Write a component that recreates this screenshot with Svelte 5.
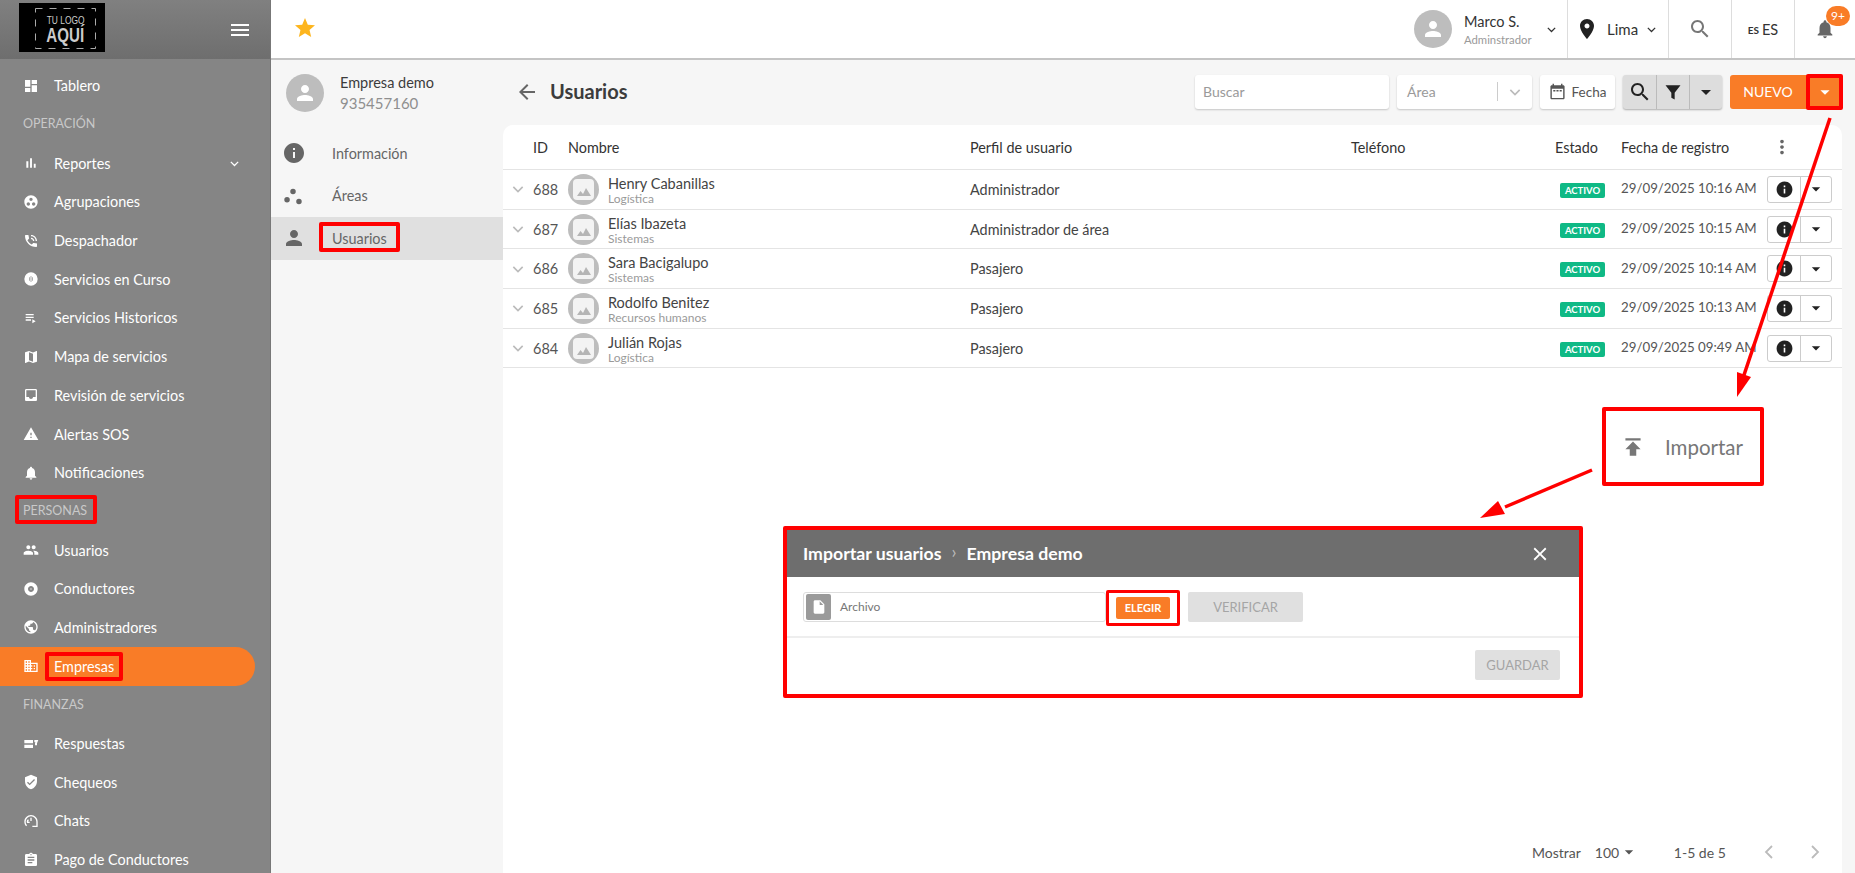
<script>
  const p = {
    dashboard: 'M3 13h8V3H3v10zm0 8h8v-6H3v6zm10 0h8V11h-8v10zm0-18v6h8V3h-8z',
    bars: 'M5 9.2h3V19H5zM10.6 5h2.8v14h-2.8zm5.6 8H19v6h-2.8z',
    group: 'M12 2C6.48 2 2 6.48 2 12s4.48 10 10 10 10-4.48 10-10S17.52 2 12 2zM8 17.5c-1.38 0-2.5-1.12-2.5-2.5s1.12-2.5 2.5-2.5 2.5 1.12 2.5 2.5-1.12 2.5-2.5 2.5zM9.5 8c0-1.38 1.12-2.5 2.5-2.5s2.5 1.12 2.5 2.5-1.12 2.5-2.5 2.5S9.5 9.38 9.5 8zm6.5 9.5c-1.38 0-2.5-1.12-2.5-2.5s1.12-2.5 2.5-2.5 2.5 1.12 2.5 2.5-1.12 2.5-2.5 2.5z',
    phone: 'M20 15.5c-1.25 0-2.45-.2-3.57-.57-.35-.11-.74-.03-1.02.24l-2.2 2.2c-2.83-1.44-5.15-3.75-6.59-6.59l2.2-2.21c.28-.26.36-.65.25-1C8.7 6.45 8.5 5.25 8.5 4c0-.55-.45-1-1-1H4c-.55 0-1 .45-1 1 0 9.39 7.61 17 17 17 .55 0 1-.45 1-1v-3.5c0-.55-.45-1-1-1zM19 12h2c0-4.97-4.03-9-9-9v2c3.87 0 7 3.13 7 7zm-4 0h2c0-2.76-2.24-5-5-5v2c1.66 0 3 1.34 3 3z',
    live: 'M12 2a10 10 0 1 0 0 20 10 10 0 0 0 0-20zM9 9.5h1v5H9zm2.5-2h1v9h-1zm2.5 2h1v5h-1z',
    playlist: 'M4 10h12v2H4zm0-4h12v2H4zm0 8h8v2H4zm10 0v6l5-3z',
    map: 'M20.5 3l-.16.03L15 5.1 9 3 3.36 4.9c-.21.07-.36.25-.36.48V20.5c0 .28.22.5.5.5l.16-.03L9 18.9l6 2.1 5.64-1.9c.21-.07.36-.25.36-.48V3.5c0-.28-.22-.5-.5-.5zM15 19l-6-2.11V5l6 2.11V19z',
    inbox: 'M19 3H5c-1.1 0-2 .9-2 2v14c0 1.1.9 2 2 2h14c1.1 0 2-.9 2-2V5c0-1.1-.9-2-2-2zm0 12h-4c0 1.66-1.35 3-3 3s-3-1.34-3-3H5V5h14v10z',
    warning: 'M1 21h22L12 2 1 21zm12-3h-2v-2h2v2zm0-4h-2v-4h2v4z',
    bell: 'M12 22c1.1 0 2-.9 2-2h-4c0 1.1.89 2 2 2zm6-6v-5c0-3.07-1.64-5.64-4.5-6.32V4c0-.83-.67-1.5-1.5-1.5s-1.5.67-1.5 1.5v.68C7.63 5.36 6 7.92 6 11v5l-2 2v1h16v-1l-2-2z',
    people: 'M16 11c1.66 0 2.99-1.34 2.99-3S17.66 5 16 5c-1.66 0-3 1.34-3 3s1.34 3 3 3zm-8 0c1.66 0 2.99-1.34 2.99-3S9.66 5 8 5C6.34 5 5 6.34 5 8s1.34 3 3 3zm0 2c-2.33 0-7 1.17-7 3.5V19h14v-2.5c0-2.33-4.67-3.5-7-3.5zm8 0c-.29 0-.62.02-.97.05 1.16.84 1.97 1.97 1.97 3.45V19h6v-2.5c0-2.33-4.67-3.5-7-3.5z',
    album: 'M12 2C6.48 2 2 6.48 2 12s4.48 10 10 10 10-4.48 10-10S17.52 2 12 2zm0 14.5c-2.49 0-4.5-2.01-4.5-4.5S9.51 7.5 12 7.5s4.5 2.01 4.5 4.5-2.01 4.5-4.5 4.5zm0-5.5c-.55 0-1 .45-1 1s.45 1 1 1 1-.45 1-1-.45-1-1-1z',
    globe: 'M12 2C6.48 2 2 6.48 2 12s4.48 10 10 10 10-4.48 10-10S17.52 2 12 2zm-1 17.93c-3.95-.49-7-3.85-7-7.93 0-.62.08-1.21.21-1.79L9 15v1c0 1.1.9 2 2 2v1.93zm6.9-2.54c-.26-.81-1-1.39-1.9-1.39h-1v-3c0-.55-.45-1-1-1H8v-2h2c.55 0 1-.45 1-1V7h2c1.1 0 2-.9 2-2v-.41c2.93 1.19 5 4.06 5 7.41 0 2.08-.8 3.97-2.1 5.39z',
    business: 'M12 7V3H2v18h20V7H12zM6 19H4v-2h2v2zm0-4H4v-2h2v2zm0-4H4V9h2v2zm0-4H4V5h2v2zm4 12H8v-2h2v2zm0-4H8v-2h2v2zm0-4H8V9h2v2zm0-4H8V5h2v2zm10 12h-8v-2h2v-2h-2v-2h2v-2h-2V9h8v10zm-2-8h-2v2h2v-2zm0 4h-2v2h2v-2z',
    answers: 'M2 6h13v5H2zm0 7h13v5H2zm15-7h6l-2 5v3h-3v-4h1.5L17 9z',
    shield: 'M12 1L3 5v6c0 5.55 3.84 10.74 9 12 5.16-1.26 9-6.45 9-12V5l-9-4zm-2 16l-4-4 1.41-1.41L10 14.17l6.59-6.59L18 9l-8 8z',
    gauge: 'M12 3C6.5 3 2 7.5 2 13c0 2.6 1 5 2.6 6.8l1.5-1.3A8 8 0 0 1 4 13a8 8 0 0 1 16 0v6h-6v2h8v-8c0-5.5-4.5-10-10-10zm-1 4v5h2V7zM6 11a6 6 0 0 0 0 4h4v-2H8c0-1 .3-1.6.8-2.4L7.5 9.5z',
    clipboard: 'M19 3h-4.18C14.4 1.84 13.3 1 12 1c-1.3 0-2.4.84-2.82 2H5c-1.1 0-2 .9-2 2v14c0 1.1.9 2 2 2h14c1.1 0 2-.9 2-2V5c0-1.1-.9-2-2-2zm-7 0c.55 0 1 .45 1 1s-.45 1-1 1-1-.45-1-1 .45-1 1-1zm2 14H7v-2h7v2zm3-4H7v-2h10v2zm0-4H7V7h10v2z',
    info: 'M12 2C6.48 2 2 6.48 2 12s4.48 10 10 10 10-4.48 10-10S17.52 2 12 2zm1 15h-2v-6h2v6zm0-8h-2V7h2v2z',
    person: 'M12 12c2.21 0 4-1.79 4-4s-1.79-4-4-4-4 1.79-4 4 1.79 4 4 4zm0 2c-2.67 0-8 1.34-8 4v2h16v-2c0-2.66-5.33-4-8-4z',
    place: 'M12 2C8.13 2 5 5.13 5 9c0 5.25 7 13 7 13s7-7.75 7-13c0-3.87-3.13-7-7-7zm0 9.5c-1.38 0-2.5-1.12-2.5-2.5s1.12-2.5 2.5-2.5 2.5 1.12 2.5 2.5-1.12 2.5-2.5 2.5z',
    search: 'M15.5 14h-.79l-.28-.27C15.41 12.59 16 11.11 16 9.5 16 5.91 13.09 3 9.5 3S3 5.91 3 9.5 5.91 16 9.5 16c1.61 0 3.09-.59 4.23-1.57l.27.28v.79l5 4.99L20.49 19l-4.99-5zm-6 0C7.01 14 5 11.99 5 9.5S7.01 5 9.5 5 14 7.01 14 9.5 11.99 14 9.5 14z',
    funnel: 'M3 4h18l-7 9v8l-4-2v-6z',
    event: 'M20 3h-1V1h-2v2H7V1H5v2H4c-1.1 0-2 .9-2 2v16c0 1.1.9 2 2 2h16c1.1 0 2-.9 2-2V5c0-1.1-.9-2-2-2zm0 18H4V8h16v13zM6 10h3v2H6zm4.5 0h3v2h-3zm4.5 0h3v2h-3z',
    back: 'M20 11H7.83l5.59-5.59L12 4l-8 8 8 8 1.41-1.41L7.83 13H20v-2z',
    publish: 'M5 4v2h14V4H5zm0 10h4v6h6v-6h4l-7-7-7 7z',
    file: 'M6 2c-1.1 0-1.99.9-1.99 2L4 20c0 1.1.89 2 1.99 2H18c1.1 0 2-.9 2-2V8l-6-6H6zm7 7V3.5L18.5 9H13z',
    close: 'M19 6.41L17.59 5 12 10.59 6.41 5 5 6.41 10.59 12 5 17.59 6.41 19 12 13.41 17.59 19 19 17.59 13.41 12z',
    star: 'M12 17.27L18.18 21l-1.64-7.03L22 9.24l-7.19-.61L12 2 9.19 8.63 2 9.24l5.46 4.73L5.82 21z',
    dots: 'M12 8c1.1 0 2-.9 2-2s-.9-2-2-2-2 .9-2 2 .9 2 2 2zm0 2c-1.1 0-2 .9-2 2s.9 2 2 2 2-.9 2-2-.9-2-2-2zm0 6c-1.1 0-2 .9-2 2s.9 2 2 2 2-.9 2-2-.9-2-2-2z',
    caret: 'M7 10l5 5 5-5z',
    areas: 'M12 4a3 3 0 1 0 0 6 3 3 0 0 0 0-6zM5.5 13a3 3 0 1 0 0 6 3 3 0 0 0 0-6zM18.5 15a3 3 0 1 0 0 6 3 3 0 0 0 0-6z'
  };

  const menu = [
    { label: 'Tablero', icon: 'dashboard' },
    { section: 'OPERACIÓN' },
    { label: 'Reportes', icon: 'bars', more: true },
    { label: 'Agrupaciones', icon: 'group' },
    { label: 'Despachador', icon: 'phone' },
    { label: 'Servicios en Curso', icon: 'live' },
    { label: 'Servicios Historicos', icon: 'playlist' },
    { label: 'Mapa de servicios', icon: 'map' },
    { label: 'Revisión de servicios', icon: 'inbox' },
    { label: 'Alertas SOS', icon: 'warning' },
    { label: 'Notificaciones', icon: 'bell' },
    { section: 'PERSONAS' },
    { label: 'Usuarios', icon: 'people' },
    { label: 'Conductores', icon: 'album' },
    { label: 'Administradores', icon: 'globe' },
    { label: 'Empresas', icon: 'business', active: true },
    { section: 'FINANZAS' },
    { label: 'Respuestas', icon: 'answers' },
    { label: 'Chequeos', icon: 'shield' },
    { label: 'Chats', icon: 'gauge' },
    { label: 'Pago de Conductores', icon: 'clipboard' }
  ];

  const users = [
    { id: 688, name: 'Henry Cabanillas', area: 'Logística', role: 'Administrador', date: '29/09/2025 10:16 AM' },
    { id: 687, name: 'Elías Ibazeta', area: 'Sistemas', role: 'Administrador de área', date: '29/09/2025 10:15 AM' },
    { id: 686, name: 'Sara Bacigalupo', area: 'Sistemas', role: 'Pasajero', date: '29/09/2025 10:14 AM' },
    { id: 685, name: 'Rodolfo Benitez', area: 'Recursos humanos', role: 'Pasajero', date: '29/09/2025 10:13 AM' },
    { id: 684, name: 'Julián Rojas', area: 'Logística', role: 'Pasajero', date: '29/09/2025 09:49 AM' }
  ];
</script>

{#snippet icon(name, size = 24)}
  <svg width={size} height={size} viewBox="0 0 24 24" fill="currentColor" aria-hidden="true"><path fill-rule="evenodd" d={p[name]} /></svg>
{/snippet}

{#snippet chevron(size = 12, color = '#555')}
  <svg width={size} height={size} viewBox="0 0 12 12" fill="none" stroke={color} stroke-width="1.4" aria-hidden="true"><path d="M2 4.2l4 4 4-4" /></svg>
{/snippet}

<div class="app">
  <aside class="sidebar">
    <div class="brand">
      <div class="logo">
        <svg class="logo-frame" width="61" height="41" viewBox="0 0 61 41" fill="none" stroke="#aaa" aria-hidden="true"><rect x="0.5" y="0.5" width="60" height="40" stroke-dasharray="7 7" /></svg>
        <span class="logo-small">TU LOGO</span>
        <span class="logo-big">AQUÍ</span>
      </div>
      <div class="burger"><i></i><i></i><i></i></div>
    </div>
    <nav>
      {#each menu as m}
        {#if m.section}
          <div class="section">{m.section}</div>
        {:else}
          <div class="item" class:active={m.active}>
            <span class="item-icon">{@render icon(m.icon, 16)}</span>
            <span>{m.label}</span>
            {#if m.more}<span class="item-more">{@render chevron(11, '#fff')}</span>{/if}
          </div>
        {/if}
      {/each}
    </nav>
  </aside>

  <div class="right">
    <header class="topbar">
      <span class="star">{@render icon('star', 24)}</span>
      <div class="top-user">
        <span class="avatar">{@render icon('person', 24)}</span>
        <div class="who"><b>Marco S.</b><small>Adminstrador</small></div>
        {@render chevron(11, '#333')}
      </div>
      <div class="top-cell city">
        <span class="pin">{@render icon('place', 24)}</span>
        <span>Lima</span>
        {@render chevron(11, '#333')}
      </div>
      <div class="top-cell s">{@render icon('search', 24)}</div>
      <div class="top-cell lang"><small>ES</small> ES</div>
      <div class="top-cell bell">
        {@render icon('bell', 22)}
        <span class="badge">9+</span>
      </div>
    </header>

    <div class="body">
      <div class="panel">
        <div class="company">
          <span class="avatar">{@render icon('person', 24)}</span>
          <div class="company-text"><div>Empresa demo</div><div class="phone">935457160</div></div>
        </div>
        <div class="tab"><span class="tab-icon">{@render icon('info', 24)}</span>Información</div>
        <div class="tab"><span class="tab-icon">{@render icon('areas', 22)}</span>Áreas</div>
        <div class="tab selected"><span class="tab-icon">{@render icon('person', 24)}</span>Usuarios</div>
      </div>

      <main class="main">
        <div class="toolbar">
          <span class="back">{@render icon('back', 24)}</span>
          <h1>Usuarios</h1>
          <div class="tools">
            <div class="field search-field">Buscar</div>
            <div class="field area-field">
              <span>Área</span>
              <span class="area-end">{@render chevron(14, '#bbb')}</span>
            </div>
            <div class="field date-field">{@render icon('event', 17)}<span>Fecha</span></div>
            <div class="btn-group">
              <span>{@render icon('search', 24)}</span>
              <span>{@render icon('funnel', 20)}</span>
              <span>{@render icon('caret', 24)}</span>
            </div>
            <div class="new-btn">
              <span class="new-label">NUEVO</span>
              <span class="new-caret">{@render icon('caret', 22)}</span>
            </div>
          </div>
        </div>

        <section class="card">
          <div class="row head">
            <span></span>
            <span>ID</span>
            <span>Nombre</span>
            <span>Perfil de usuario</span>
            <span>Teléfono</span>
            <span>Estado</span>
            <span>Fecha de registro</span>
            <span class="head-dots">{@render icon('dots', 22)}</span>
          </div>
          {#each users as u}
            <div class="row">
              <span class="row-chev">{@render chevron(14, '#bbb')}</span>
              <span class="num">{u.id}</span>
              <div class="name-cell">
                <span class="thumb"><span class="thumb-in">
                  <svg width="14" height="8" viewBox="0 0 14 8" fill="#b5b5b5" aria-hidden="true"><path d="M0 8l3.5-5 2.5 3 3-6 5 8z" /></svg>
                </span></span>
                <div class="name-text"><div>{u.name}</div><small>{u.area}</small></div>
              </div>
              <span>{u.role}</span>
              <span></span>
              <span><em class="status">ACTIVO</em></span>
              <span class="date">{u.date}</span>
              <div class="row-actions">
                <span class="ra-info">{@render icon('info', 19)}</span>
                <span class="ra-caret">{@render icon('caret', 20)}</span>
              </div>
            </div>
          {/each}
          <div class="pager">
            <span>Mostrar</span>
            <span class="pager-size">100 {@render icon('caret', 20)}</span>
            <span class="pager-range">1-5 de 5</span>
            <svg width="12" height="16" viewBox="0 0 12 16" fill="none" stroke="#bbb" stroke-width="1.8" aria-hidden="true"><path d="M9 2L3 8l6 6" /></svg>
            <svg class="pager-next" width="12" height="16" viewBox="0 0 12 16" fill="none" stroke="#bbb" stroke-width="1.8" aria-hidden="true"><path d="M3 2l6 6-6 6" /></svg>
          </div>
        </section>
      </main>
    </div>
  </div>

  <!-- notas del tutorial encima de la pantalla -->
  <div class="mark m-personas"></div>
  <div class="mark m-empresas"></div>
  <div class="mark m-usuarios"></div>
  <div class="mark m-caret"></div>

  <div class="import-box">
    <span class="import-icon">{@render icon('publish', 26)}</span>
    <span>Importar</span>
  </div>

  <div class="dialog">
    <div class="dialog-head">
      <span>Importar usuarios</span>
      <span class="d-sep">›</span>
      <span>Empresa demo</span>
      <span class="d-close">{@render icon('close', 22)}</span>
    </div>
    <div class="dialog-body">
      <div class="file-input">
        <span class="file-icon">{@render icon('file', 16)}</span>
        <span class="file-label">Archivo</span>
        <span class="choose-mark"><span class="choose">ELEGIR</span></span>
      </div>
      <span class="disabled verify">VERIFICAR</span>
    </div>
    <div class="dialog-foot"><span class="disabled save">GUARDAR</span></div>
  </div>

  <svg class="arrows" width="1855" height="873" viewBox="0 0 1855 873" aria-hidden="true">
    <path d="M1830 118L1743 378" stroke="#f00" stroke-width="3.5" fill="none" />
    <path d="M1737 397L1737 372L1751 377z" fill="#f00" />
    <path d="M1592 470L1505 507" stroke="#f00" stroke-width="3.5" fill="none" />
    <path d="M1480 518L1498 501L1505 514z" fill="#f00" />
  </svg>
</div>

<style>
  :global(body) {
    margin: 0;
    overflow: hidden;
    background: #f6f6f6;
    font-family: Lato, "Noto Sans", sans-serif;
    color: #3c3c3c;
  }

  .app {
    position: relative;
    display: flex;
    width: 1855px;
    height: 873px;
    overflow: hidden;
  }

  /* menu lateral */
  .sidebar {
    width: 271px;
    flex: none;
    background: #858585;
    color: #fff;
    border-right: 1px solid #777;
    box-sizing: border-box;
  }

  .brand {
    display: flex;
    align-items: center;
    justify-content: space-between;
    height: 59px;
    padding: 0 21px 0 19px;
    background: linear-gradient(180deg, #808080, #6e6e6e);
  }

  .logo {
    position: relative;
    width: 86px;
    height: 49px;
    margin-top: -4px;
    padding: 5px 0 0 7px;
    box-sizing: border-box;
    background: #000;
    display: flex;
    flex-direction: column;
    align-items: center;
    justify-content: center;
    color: #ccc;
    font-family: "Liberation Sans", sans-serif;
    line-height: 1;
  }

  .logo-frame { position: absolute; left: 16px; top: 5px; }
  .logo-small { font-size: 10.5px; transform: scaleX(0.8); }
  .logo-big { font-size: 21px; font-weight: 700; line-height: 20px; transform: scaleX(0.72); }

  .burger { display: flex; flex-direction: column; gap: 3px; }
  .burger i { display: block; width: 18px; height: 2px; background: #fff; }

  nav { padding-top: 7.5px; }

  .section {
    height: 38.7px;
    line-height: 38.7px;
    padding-left: 23px;
    font-size: 12.5px;
    color: #c9c9c9;
  }

  .item {
    display: flex;
    align-items: center;
    height: 38.7px;
    padding-left: 23px;
    font-size: 14.4px;
    color: #fff;
    box-sizing: border-box;
  }

  .item-icon { width: 31px; display: flex; flex: none; }
  .item-more { margin-left: auto; margin-right: 30px; display: flex; }

  .item.active {
    width: 255px;
    background: #f97c27;
    border-radius: 0 20px 20px 0;
  }

  /* barra superior */
  .right { flex: 1; display: flex; flex-direction: column; min-width: 0; }

  .topbar {
    display: flex;
    align-items: stretch;
    height: 60px;
    box-sizing: border-box;
    background: #fff;
    border-bottom: 2px solid #c4c4c4;
    font-size: 15px;
  }

  .star { color: #fdb51e; margin: 16px auto 0 22px; }

  .avatar {
    width: 38px;
    height: 38px;
    flex: none;
    border-radius: 50%;
    background: #bdbdbd;
    color: #fff;
    display: flex;
    align-items: center;
    justify-content: center;
  }

  .top-user {
    display: flex;
    align-items: center;
    width: 153px;
    box-sizing: border-box;
    padding-right: 10px;
  }

  .who { margin: 0 auto 0 12px; }
  .who b { display: block; font-weight: 400; font-size: 14.5px; color: #333; }
  .who small { display: block; font-size: 11.3px; color: #9a9a9a; margin-top: 3px; }

  .top-cell {
    display: flex;
    align-items: center;
    justify-content: center;
    box-sizing: border-box;
    border-left: 1px solid #ddd;
    position: relative;
    color: #333;
  }

  .city { width: 101px; gap: 8px; justify-content: flex-start; padding-left: 7px; }
  .pin { display: flex; color: #222; }
  .s { width: 63px; color: #777; }
  .lang { width: 63px; font-size: 14.5px; gap: 3px; }
  .lang small { font-size: 10px; font-weight: 700; margin-top: 2px; }
  .bell { width: 61px; color: #666; }

  .badge {
    position: absolute;
    top: 6px;
    right: 5px;
    width: 24px;
    height: 20px;
    border-radius: 10px;
    background: #f97c27;
    color: #fff;
    font-size: 12px;
    text-align: center;
    line-height: 20px;
  }

  /* contenido */
  .body { flex: 1; display: flex; min-height: 0; }

  .panel { width: 232px; flex: none; padding-top: 14px; font-size: 14.4px; }

  .company { display: flex; align-items: center; padding-left: 15px; height: 38px; margin-bottom: 20px; }
  .company-text { margin-left: 16px; font-size: 14.5px; line-height: 20px; }
  .phone { color: #8f8f8f; font-size: 15px; }

  .tab { display: flex; align-items: center; height: 42.5px; color: #666; }
  .tab-icon { width: 61px; padding-left: 11px; box-sizing: border-box; display: flex; align-items: center; color: #666; }
  .tab.selected { background: #e0e0e0; }

  .main { flex: 1; display: flex; flex-direction: column; min-width: 0; padding-right: 13px; }

  .toolbar { display: flex; align-items: center; height: 63px; margin-bottom: 2px; flex: none; }
  .back { display: flex; margin-left: 12px; color: #666; }

  h1 { margin: -2px 0 0 11px; font-size: 20px; font-weight: 700; color: #3c3c3c; }

  .tools { display: flex; align-items: center; gap: 8px; margin-left: auto; margin-right: -1px; }

  .field {
    display: flex;
    align-items: center;
    height: 34px;
    background: #fff;
    border-radius: 3px;
    box-shadow: 0 1px 2px rgba(0, 0, 0, 0.2);
    box-sizing: border-box;
    font-size: 14px;
    color: #9a9a9a;
  }

  .search-field { width: 194px; padding-left: 8px; }
  .area-field { width: 135px; padding-left: 10px; justify-content: space-between; }
  .area-end { border-left: 1px solid #ccc; height: 19px; padding: 0 10px; display: flex; align-items: center; }
  .date-field { width: 75px; gap: 6px; justify-content: center; color: #555; font-size: 13.5px; }

  .btn-group { display: flex; height: 34px; border-radius: 3px; background: #ddd; box-shadow: 0 1px 2px rgba(0, 0, 0, 0.3); color: #222; }
  .btn-group span { width: 33px; display: flex; align-items: center; justify-content: center; }
  .btn-group span + span { border-left: 1px solid #bbb; box-sizing: border-box; }

  .new-btn { display: flex; height: 34px; width: 113px; border-radius: 3px; background: #f97c27; color: #fff; font-size: 14px; }
  .new-label { flex: 1; display: flex; align-items: center; justify-content: center; }
  .new-caret { width: 37px; display: flex; align-items: center; justify-content: center; }

  .card {
    position: relative;
    flex: 1;
    background: #fff;
    border-radius: 10px 10px 0 0;
    font-size: 14.4px;
    color: #444;
  }

  .row {
    display: grid;
    grid-template-columns: 30px 35px 402px 381px 204px 66px 146px 75px;
    align-items: center;
    height: 39.7px;
    box-sizing: border-box;
    border-bottom: 1px solid #e4e4e4;
  }

  .head { height: 45px; color: #333; }
  .head-dots { display: flex; margin-left: 4px; color: #666; }

  .row-chev { display: flex; justify-content: center; }
  .num { font-size: 14.5px; color: #555; }

  .name-cell { display: flex; align-items: center; gap: 9px; }
  .thumb { width: 31px; height: 31px; border-radius: 50%; background: #bdbdbd; display: flex; align-items: center; justify-content: center; flex: none; }
  .thumb-in { width: 21px; height: 21px; border-radius: 4px; background: #f3f3f3; display: flex; align-items: flex-end; justify-content: center; padding-bottom: 4px; box-sizing: border-box; }
  .name-text { font-size: 14.5px; line-height: 16px; color: #444; padding-top: 3px; }
  .name-text small { display: block; font-size: 12px; line-height: 14px; color: #9a9a9a; }

  .status { display: block; margin: 2px 0 0 5px; font-style: normal; font-size: 9.5px; font-weight: 700; line-height: 15px; width: 45px; text-align: center; border-radius: 2px; background: #0fb985; color: #fff; }
  .date { color: #555; font-size: 13.3px; margin-top: -2px; white-space: nowrap; }

  .row-actions { display: flex; width: 65px; height: 27px; border: 1px solid #ccc; border-radius: 3px; box-sizing: border-box; color: #222; }
  .ra-info { width: 32px; display: flex; align-items: center; justify-content: center; border-right: 1px solid #ccc; }
  .ra-caret { flex: 1; display: flex; align-items: center; justify-content: center; }

  .pager {
    position: absolute;
    right: 0;
    bottom: 0;
    display: flex;
    align-items: center;
    height: 42px;
    width: 310px;
    box-sizing: border-box;
    font-size: 14px;
    color: #555;
  }

  .pager-size { display: flex; align-items: center; margin-left: 14px; width: 79px; }
  .pager-range { width: 89px; }
  .pager-next { margin-left: 34px; }

  /* recuadros rojos de la guia */
  .mark { position: absolute; border: 4px solid #f00; border-radius: 2px; box-sizing: border-box; }
  .m-personas { left: 15px; top: 495px; width: 82px; height: 29px; }
  .m-empresas { left: 45px; top: 652px; width: 78px; height: 29px; }
  .m-usuarios { left: 319px; top: 222px; width: 81px; height: 30px; }
  .m-caret { left: 1806px; top: 74px; width: 37px; height: 36px; }

  .import-box {
    position: absolute;
    left: 1602px;
    top: 407px;
    width: 162px;
    height: 79px;
    box-sizing: border-box;
    border: 4px solid #f00;
    border-radius: 2px;
    background: #fff;
    display: flex;
    align-items: center;
    font-size: 20.5px;
    color: #777;
  }

  .import-icon { display: flex; margin: 0 19px 0 14px; }

  .dialog {
    position: absolute;
    left: 783px;
    top: 526px;
    width: 800px;
    height: 172px;
    box-sizing: border-box;
    border: 4px solid #f00;
    border-radius: 2px;
    background: #fff;
  }

  .dialog-head {
    display: flex;
    align-items: center;
    height: 47px;
    background: #6e6e6e;
    color: #fff;
    padding: 0 16px;
    font-size: 17.7px;
    font-weight: 700;
  }

  .d-sep { margin: -4px 10px 0; font-weight: 400; color: #bbb; }
  .d-close { margin-left: auto; margin-right: 12px; display: flex; }

  .dialog-body { display: flex; align-items: center; height: 59px; padding: 0 16px; border-bottom: 2px solid #eee; }

  .file-input { position: relative; display: flex; align-items: center; width: 303px; height: 30px; border: 1px solid #ddd; border-radius: 3px; box-sizing: border-box; font-size: 12px; color: #777; }
  .file-icon { width: 25px; height: 26px; margin-left: 2px; border-radius: 2px; background: #9a9a9a; color: #fff; display: flex; align-items: center; justify-content: center; }
  .file-label { margin-left: 9px; }

  .choose-mark { position: absolute; left: 302px; top: -3px; width: 74px; height: 36px; border: 3px solid #f00; border-radius: 2px; box-sizing: border-box; background: #fff; display: flex; align-items: center; justify-content: center; }
  .choose { display: block; width: 54px; height: 22px; line-height: 22px; text-align: center; background: #f97c27; color: #fff; border-radius: 2px; font-size: 11px; font-weight: 700; }

  .verify { margin-left: 82px; width: 115px; }

  .disabled { display: block; height: 30px; line-height: 30px; text-align: center; background: #e0e0e0; color: #a5a5a5; border-radius: 2px; font-size: 13px; }

  .dialog-foot { display: flex; justify-content: flex-end; padding: 12px 19px 0 0; }
  .save { width: 85px; }

  .arrows { position: absolute; left: 0; top: 0; pointer-events: none; }
</style>
